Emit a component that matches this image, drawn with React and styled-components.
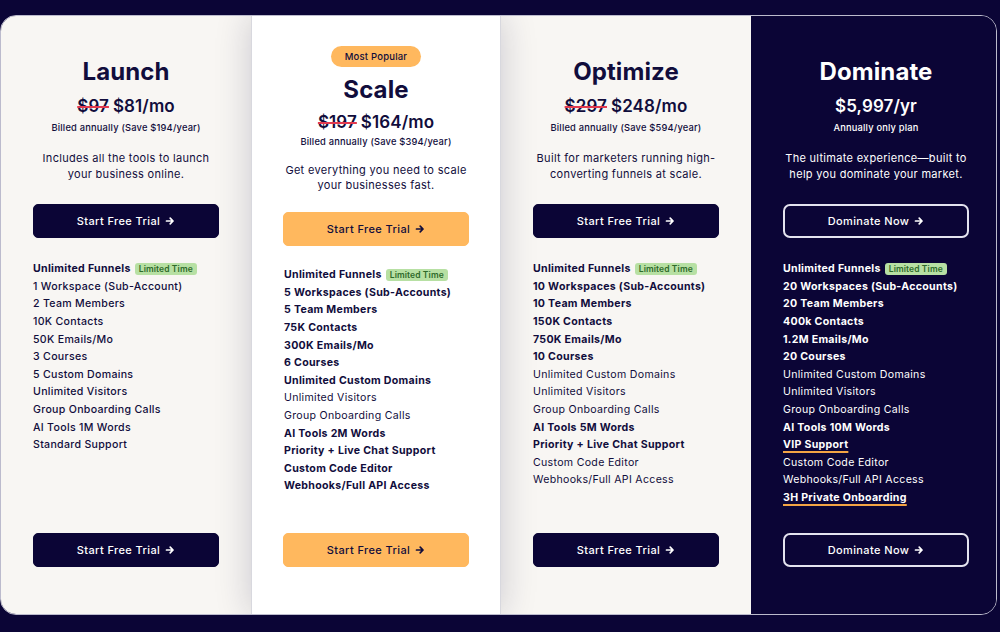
import React from "react";
import styled, { createGlobalStyle, css } from "styled-components";

const Colors = {
  navy: "#0b0536",
  ink: "#110d3c",
  cream: "#f8f6f3",
  white: "#ffffff",
  orange: "#ffb85e",
  underline: "#f3a444",
  green: "#b7e0a3",
  greenText: "#2e6a2a",
  red: "#e23a4f"
};

const GlobalStyle = createGlobalStyle`
  html, body {
    margin: 0;
    padding: 0;
    background: ${Colors.navy};
  }
  body {
    font-family: Inter, "Open Sans", "Liberation Sans", sans-serif;
    -webkit-font-smoothing: antialiased;
  }
`;

const Page = styled.div`
  width: 1000px;
  height: 632px;
  padding-top: 15px;
  box-sizing: border-box;
  background: ${Colors.navy};
`;

const Board = styled.div`
  width: 997px;
  height: 600px;
  display: grid;
  grid-template-columns: 250px 250px 250px 1fr;
  border-radius: 16px;
  overflow: hidden;
  box-sizing: border-box;
  border: 1px solid rgba(220, 220, 232, 0.85);
`;

function cardBackground(variant) {
  switch (variant) {
    case "featured":
      return Colors.white;
    case "dark":
      return Colors.navy;
    default:
      return Colors.cream;
  }
}

const Card = styled.div`
  display: flex;
  flex-direction: column;
  align-items: center;
  padding: ${props => (props.$variant === "featured" ? "30px" : "41px")} 32px
    47px;
  background: ${props => cardBackground(props.$variant)};
  color: ${props => (props.$variant === "dark" ? Colors.white : Colors.ink)};
  position: relative;
  ${props =>
    props.$variant === "featured" &&
    css`
      z-index: 1;
      box-shadow: 0 0 34px rgba(20, 18, 60, 0.2);
      border-left: 1px solid #d8d8de;
      border-right: 1px solid #d8d8de;
    `}
`;

const Popular = styled.span`
  display: inline-flex;
  align-items: center;
  justify-content: center;
  width: 90px;
  height: 21px;
  border-radius: 11px;
  background: ${Colors.orange};
  font-size: 9.5px;
  font-weight: 500;
  letter-spacing: 0.2px;
  color: ${Colors.ink};
  margin-bottom: 8px;
`;

const Title = styled.h2`
  margin: 0;
  font-size: 24px;
  line-height: 29px;
  font-weight: 700;
  letter-spacing: 0.1px;
`;

const Price = styled.div`
  margin-top: ${props => (props.$tight ? "7px" : "9px")};
  font-size: 17px;
  line-height: 22px;
  font-weight: 600;
  letter-spacing: 0.1px;

  s {
    text-decoration-color: ${Colors.red};
    text-decoration-thickness: 2px;
    margin-right: 4px;
  }
`;

const Billed = styled.div`
  margin-top: ${props => (props.$tight ? "2px" : "4px")};
  font-size: 9.3px;
  line-height: 14px;
  font-weight: 500;
  letter-spacing: 0.2px;
`;

const Description = styled.p`
  margin: ${props => (props.$tight ? "14px 0 0" : "15px 0 0")};
  font-size: 11px;
  line-height: ${props => (props.$tight ? "15px" : "16px")};
  font-weight: 400;
  letter-spacing: 0.3px;
  text-align: center;
`;

function buttonLook(variant) {
  switch (variant) {
    case "featured":
      return css`
        background: ${Colors.orange};
        color: ${Colors.ink};
        border: 1px solid ${Colors.orange};
      `;
    case "dark":
      return css`
        background: transparent;
        color: ${Colors.white};
        border: 2px solid #e4e3ef;
        border-radius: 7px;
      `;
    default:
      return css`
        background: ${Colors.navy};
        color: ${Colors.white};
        border: 1px solid ${Colors.navy};
      `;
  }
}

const Button = styled.button`
  width: 186px;
  height: 34px;
  box-sizing: border-box;
  display: flex;
  align-items: center;
  justify-content: center;
  gap: 5px;
  border-radius: 5px;
  font-family: inherit;
  font-size: 11px;
  font-weight: 500;
  letter-spacing: 0.4px;
  cursor: pointer;
  flex-shrink: 0;
  ${props => buttonLook(props.$variant)}
`;

const TopButton = styled(Button)`
  margin-top: ${props => (props.$tight ? "19px" : "22px")};
`;

const BottomButton = styled(Button)`
  margin-top: auto;
`;

const Features = styled.ul`
  list-style: none;
  margin: ${props => (props.$tight ? "20px 0 0" : "22px 0 0")};
  padding: 0;
  align-self: stretch;
`;

const weights = { bold: 700, medium: 500, regular: 400 };

const Feature = styled.li`
  display: flex;
  align-items: center;
  gap: 4px;
  height: 17.6px;
  font-size: 10.6px;
  letter-spacing: 0.3px;
  white-space: nowrap;
  font-weight: ${props => weights[props.$weight]};

  u {
    text-decoration: underline;
    text-decoration-color: ${Colors.underline};
    text-decoration-thickness: 2px;
    text-underline-offset: 3px;
  }
`;

const Limited = styled.span`
  display: inline-flex;
  align-items: center;
  height: 12px;
  padding: 0 4px;
  border-radius: 3px;
  background: ${Colors.green};
  color: ${Colors.greenText};
  font-size: 8.5px;
  font-weight: 600;
  letter-spacing: 0.1px;
`;

function Arrow() {
  return (
    <svg width="10" height="10" viewBox="0 0 10 10" fill="none">
      <path
        d="M1.5 5h6.5M5.2 2.1L8 5 5.2 7.9"
        stroke="currentColor"
        strokeWidth="1.7"
        strokeLinecap="round"
        strokeLinejoin="round"
      />
    </svg>
  );
}

const B = (text, extra = {}) => ({ text, weight: "bold", ...extra });
const M = text => ({ text, weight: "medium" });
const R = text => ({ text, weight: "regular" });

const plans = [
  {
    name: "Launch",
    variant: "light",
    old: "$97",
    price: "$81/mo",
    billed: "Billed annually (Save $194/year)",
    desc: ["Includes all the tools to launch", "your business online."],
    cta: "Start Free Trial",
    features: [
      B("Unlimited Funnels", { badge: true }),
      M("1 Workspace (Sub-Account)"),
      M("2 Team Members"),
      M("10K Contacts"),
      M("50K Emails/Mo"),
      M("3 Courses"),
      M("5 Custom Domains"),
      M("Unlimited Visitors"),
      M("Group Onboarding Calls"),
      M("AI Tools 1M Words"),
      M("Standard Support")
    ]
  },
  {
    name: "Scale",
    variant: "featured",
    old: "$197",
    price: "$164/mo",
    billed: "Billed annually (Save $394/year)",
    desc: ["Get everything you need to scale", "your businesses fast."],
    cta: "Start Free Trial",
    features: [
      B("Unlimited Funnels", { badge: true }),
      B("5 Workspaces (Sub-Accounts)"),
      B("5 Team Members"),
      B("75K Contacts"),
      B("300K Emails/Mo"),
      B("6 Courses"),
      B("Unlimited Custom Domains"),
      R("Unlimited Visitors"),
      R("Group Onboarding Calls"),
      B("AI Tools 2M Words"),
      B("Priority + Live Chat Support"),
      B("Custom Code Editor"),
      B("Webhooks/Full API Access")
    ]
  },
  {
    name: "Optimize",
    variant: "light",
    old: "$297",
    price: "$248/mo",
    billed: "Billed annually (Save $594/year)",
    desc: ["Built for marketers running high-", "converting funnels at scale."],
    cta: "Start Free Trial",
    features: [
      B("Unlimited Funnels", { badge: true }),
      B("10 Workspaces (Sub-Accounts)"),
      B("10 Team Members"),
      B("150K Contacts"),
      B("750K Emails/Mo"),
      B("10 Courses"),
      R("Unlimited Custom Domains"),
      R("Unlimited Visitors"),
      R("Group Onboarding Calls"),
      B("AI Tools 5M Words"),
      B("Priority + Live Chat Support"),
      R("Custom Code Editor"),
      R("Webhooks/Full API Access")
    ]
  },
  {
    name: "Dominate",
    variant: "dark",
    price: "$5,997/yr",
    billed: "Annually only plan",
    desc: ["The ultimate experience\u2014built to", "help you dominate your market."],
    cta: "Dominate Now",
    features: [
      B("Unlimited Funnels", { badge: true }),
      B("20 Workspaces (Sub-Accounts)"),
      B("20 Team Members"),
      B("400k Contacts"),
      B("1.2M Emails/Mo"),
      B("20 Courses"),
      R("Unlimited Custom Domains"),
      R("Unlimited Visitors"),
      R("Group Onboarding Calls"),
      B("AI Tools 10M Words"),
      B("VIP Support", { underline: true }),
      R("Custom Code Editor"),
      R("Webhooks/Full API Access"),
      B("3H Private Onboarding", { underline: true })
    ]
  }
];

function PlanCard({ plan }) {
  const tight = plan.variant === "featured";
  return (
    <Card $variant={plan.variant}>
      {tight ? <Popular>Most Popular</Popular> : null}
      <Title>{plan.name}</Title>
      <Price $tight={tight}>
        {plan.old ? <s>{plan.old}</s> : null}
        {plan.price}
      </Price>
      <Billed $tight={tight}>{plan.billed}</Billed>
      <Description $tight={tight}>
        {plan.desc[0]}
        <br />
        {plan.desc[1]}
      </Description>
      <TopButton $variant={plan.variant} $tight={tight}>
        {plan.cta}
        <Arrow />
      </TopButton>
      <Features $tight={tight}>
        {plan.features.map(f => (
          <Feature key={f.text} $weight={f.weight}>
            {f.underline ? <u>{f.text}</u> : f.text}
            {f.badge ? <Limited>Limited Time</Limited> : null}
          </Feature>
        ))}
      </Features>
      <BottomButton $variant={plan.variant}>
        {plan.cta}
        <Arrow />
      </BottomButton>
    </Card>
  );
}

export default function App() {
  return (
    <Page>
      <GlobalStyle />
      <Board>
        {plans.map(plan => (
          <PlanCard key={plan.name} plan={plan} />
        ))}
      </Board>
    </Page>
  );
}
